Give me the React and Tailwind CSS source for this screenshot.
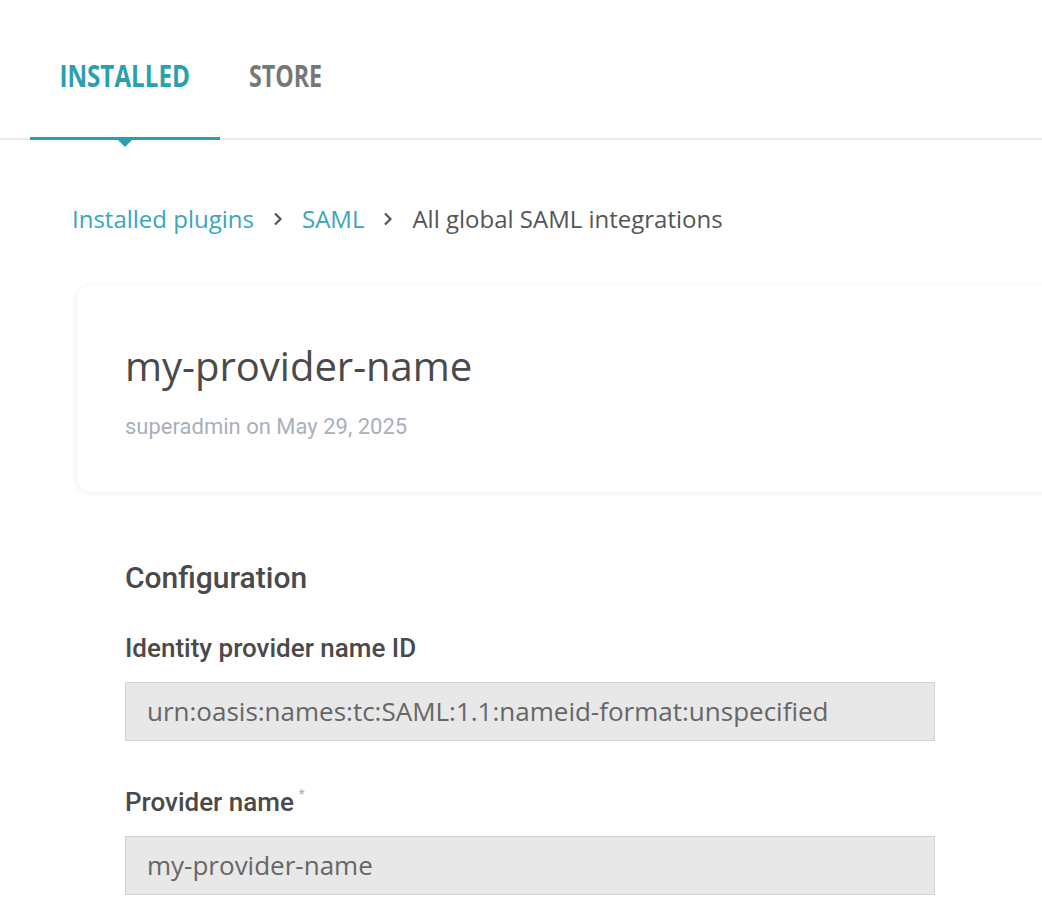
import React from 'react';

const Chevron = () => (
  <svg width="10" height="14" viewBox="0 0 10 14" className="mx-[19px] shrink-0">
    <path d="M2 1.5 L7.5 7 L2 12.5" fill="none" stroke="#555" strokeWidth="2.2" />
  </svg>
);

const Field = ({ label, value, required, first }) => (
  <div className={first ? 'mt-[37px]' : 'mt-[46px]'}>
    <div className="flex items-start text-[26px] leading-[30px] font-medium text-[#4a4a4a]" style={{ fontFamily: 'Roboto, sans-serif' }}>
      {label}
      {required && <span className="ml-[5px] text-[13px] leading-[14px] text-[#a9b0bb]">*</span>}
    </div>
    <div className="mt-[19px] w-[810px] h-[59px] bg-[#e8e8e8] border border-[#d3d3d3] flex items-center px-[21px] text-[26px] text-[#666]" style={{ fontFamily: '"Open Sans", sans-serif' }}>
      {value}
    </div>
  </div>
);

const App = () => {
  return (
    <div className="w-[1042px] h-[924px] overflow-hidden bg-white" style={{ fontFamily: '"Open Sans", sans-serif' }}>
      <div className="relative flex px-[30px] h-[140px] border-b-2 border-[#ebebeb]">
        <div className="relative flex items-center justify-center w-[190px] h-full pt-[13px]">
          <span className="inline-block text-[31px] font-bold text-[#2a9fb0] scale-x-[0.78]">INSTALLED</span>
          <div className="absolute left-0 right-0 -bottom-[2px] h-[3px] bg-[#2a9fb0]" />
          <div className="absolute left-1/2 -translate-x-1/2 -bottom-[9px] w-0 h-0 border-l-[7px] border-r-[7px] border-t-[7px] border-l-transparent border-r-transparent border-t-[#2a9fb0]" />
        </div>
        <div className="flex items-center h-full pl-[29px] pt-[13px]">
          <span className="inline-block text-[31px] font-bold text-[#777] scale-x-[0.75] origin-left">STORE</span>
        </div>
      </div>

      <div className="flex items-center pl-[72px] mt-[64px] text-[24px] leading-[30px]">
        <span className="text-[#3aa6b9]">Installed plugins</span>
        <Chevron />
        <span className="text-[#3aa6b9]">SAML</span>
        <Chevron />
        <span className="text-[#555]">All global SAML integrations</span>
      </div>

      <div className="ml-[77px] mt-[51px] w-[1000px] h-[207px] rounded-[14px] bg-white shadow-[0_1px_6px_rgba(0,0,0,0.08)] pl-[48px] pt-[57px]">
        <div className="text-[40px] leading-[48px] text-[#4a4a4a]">my-provider-name</div>
        <div className="mt-[23px] text-[22px] leading-[28px] text-[#a9b0bb]" style={{ fontFamily: 'Roboto, sans-serif' }}>superadmin on May 29, 2025</div>
      </div>

      <div className="pl-[125px] mt-[68px]">
        <div className="text-[30px] leading-[36px] font-medium text-[#4a4a4a]" style={{ fontFamily: 'Roboto, sans-serif' }}>Configuration</div>
        <Field first label="Identity provider name ID" value="urn:oasis:names:tc:SAML:1.1:nameid-format:unspecified" />
        <Field label="Provider name" value="my-provider-name" required />
      </div>
    </div>
  );
};

export default App;
